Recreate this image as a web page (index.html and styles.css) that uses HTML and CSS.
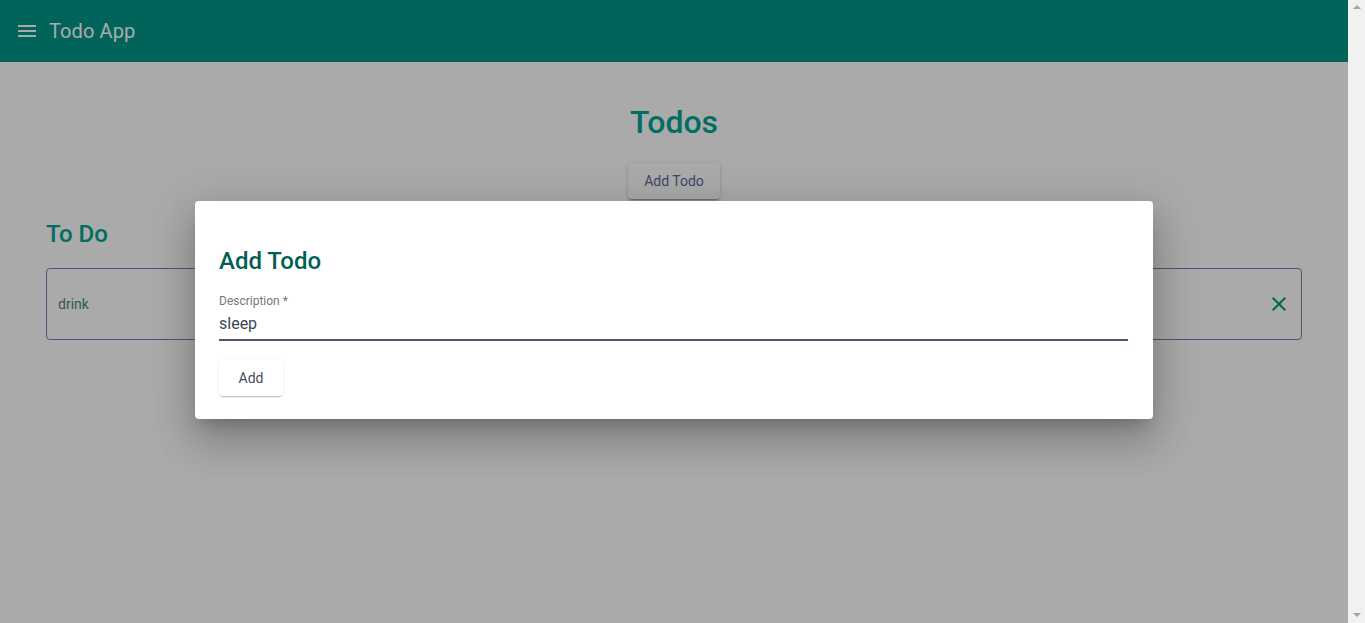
FILE: index.html
```html
<!DOCTYPE html>
<html lang="en">
<head>
<meta charset="utf-8">
<title>Todo App</title>
<link rel="stylesheet" href="styles.css">
</head>
<body>
<div class="screen">
  <div class="page">
    <header class="toolbar">
      <svg class="menu-icon" viewBox="0 0 24 24" width="24" height="24" aria-hidden="true">
        <path d="M3 18h18v-2H3v2zm0-5h18v-2H3v2zm0-7v2h18V6H3z" fill="currentColor"/>
      </svg>
      <span class="app-title">Todo App</span>
    </header>
    <main class="content">
      <h1 class="page-title">Todos</h1>
      <div class="actions">
        <button class="raised-btn" type="button">Add Todo</button>
      </div>
      <section class="list">
        <h2 class="list-title">To Do</h2>
        <div class="todo-card">
          <span class="todo-text">drink</span>
          <button class="icon-btn" type="button" aria-label="Delete">
            <svg viewBox="0 0 24 24" width="24" height="24" aria-hidden="true">
              <path d="M19 6.41L17.59 5 12 10.59 6.41 5 5 6.41 10.59 12 5 17.59 6.41 19 12 13.41 17.59 19 19 17.59 13.41 12z" fill="currentColor"/>
            </svg>
          </button>
        </div>
      </section>
    </main>
    <div class="backdrop">
      <div class="dialog" role="dialog">
        <h2 class="dialog-title">Add Todo</h2>
        <div class="field">
          <label class="field-label" for="desc">Description *</label>
          <input class="field-input" id="desc" type="text" value="sleep">
          <div class="field-underline"></div>
        </div>
        <div class="dialog-actions">
          <button class="raised-btn dialog-btn" type="button">Add</button>
        </div>
      </div>
    </div>
  </div>
  <div class="scrollbar">
    <span class="arrow arrow-up"></span>
    <span class="arrow arrow-down"></span>
  </div>
</div>
</body>
</html>
```

FILE: styles.css
```css
* { box-sizing: border-box; }

html, body {
  margin: 0;
  padding: 0;
  height: 100%;
  overflow: hidden;
}

body {
  font-family: Roboto, "Helvetica Neue", "Liberation Sans", sans-serif;
  background: #ffffff;
}

.screen {
  display: flex;
  width: 1365px;
  height: 623px;
}

.page {
  position: relative;
  flex: 1;
  background: #ffffff;
  overflow: hidden;
}

.toolbar {
  height: 62px;
  background: #009688;
  color: #ffffff;
  display: flex;
  align-items: center;
  padding: 0 15px;
}

.menu-icon {
  display: block;
  margin-right: 10px;
  margin-top: -1px;
}

.app-title {
  font-size: 20px;
  font-weight: 400;
  line-height: 24px;
  letter-spacing: 0.1px;
}

.content {
  padding: 40px 46px 0;
}

.page-title {
  margin: 0;
  text-align: center;
  font-size: 32px;
  line-height: 40px;
  font-weight: 500;
  color: #00a693;
}

.actions {
  margin-top: 21px;
  display: flex;
  justify-content: center;
}

.raised-btn {
  font-family: inherit;
  font-size: 14px;
  font-weight: 400;
  height: 36px;
  min-width: 64px;
  padding: 0 16px 1px;
  border: none;
  border-radius: 4px;
  background: #ffffff;
  color: #5c6c96;
  box-shadow: 0 3px 1px -2px rgba(0,0,0,.2), 0 2px 2px 0 rgba(0,0,0,.14), 0 1px 5px 0 rgba(0,0,0,.12);
  cursor: pointer;
}

.list-title {
  margin: 19px 0 0;
  font-size: 24px;
  line-height: 32px;
  font-weight: 500;
  color: #00a693;
}

.todo-card {
  margin-top: 18px;
  height: 72px;
  border: 1px solid #7680b0;
  border-radius: 4px;
  display: flex;
  align-items: center;
  justify-content: space-between;
  padding: 0 10px 1px 11px;
}

.todo-text {
  font-size: 14px;
  color: #3f8a83;
}

.icon-btn {
  display: flex;
  padding: 0;
  border: none;
  background: transparent;
  color: #009688;
}

.icon-btn svg { display: block; }

.backdrop {
  position: absolute;
  inset: 0;
  background: rgba(0,0,0,.335);
  display: flex;
  justify-content: center;
  align-items: flex-start;
  padding-top: 201px;
}

.dialog {
  width: 958px;
  background: #ffffff;
  border-radius: 4px;
  padding: 24px 24px 23px;
  box-shadow: 0 11px 15px -7px rgba(0,0,0,.2), 0 24px 38px 3px rgba(0,0,0,.14), 0 9px 46px 8px rgba(0,0,0,.12);
}

.dialog-title {
  margin: 20px 0 0;
  font-size: 24px;
  line-height: 32px;
  font-weight: 500;
  color: #005f56;
}

.field {
  margin-top: 17px;
  margin-right: 1px;
  display: flex;
  flex-direction: column;
}

.field-label {
  font-size: 12px;
  line-height: 14px;
  color: #777777;
}

.field-input {
  margin-top: 6px;
  font-family: inherit;
  font-size: 16px;
  line-height: 20px;
  height: 20px;
  padding: 0;
  border: none;
  outline: none;
  color: #3b4557;
  background: transparent;
}

.field-underline {
  margin-top: 5px;
  height: 2px;
  background: #4f5577;
}

.dialog-actions {
  margin-top: 19px;
  display: flex;
}

.dialog-btn {
  color: #474d5c;
  box-shadow: 0 2px 1px -1px rgba(0,0,0,.18), 0 1px 3px 0 rgba(0,0,0,.12);
}

.scrollbar {
  width: 17px;
  background: #f1f1f1;
  display: flex;
  flex-direction: column;
  justify-content: space-between;
  align-items: center;
  padding: 5px 0 6px;
}

.arrow {
  width: 0;
  height: 0;
  border-left: 4px solid transparent;
  border-right: 4px solid transparent;
}

.arrow-up {
  border-bottom: 4px solid #a3a3a3;
}

.arrow-down {
  border-top: 4px solid #a3a3a3;
}
```
